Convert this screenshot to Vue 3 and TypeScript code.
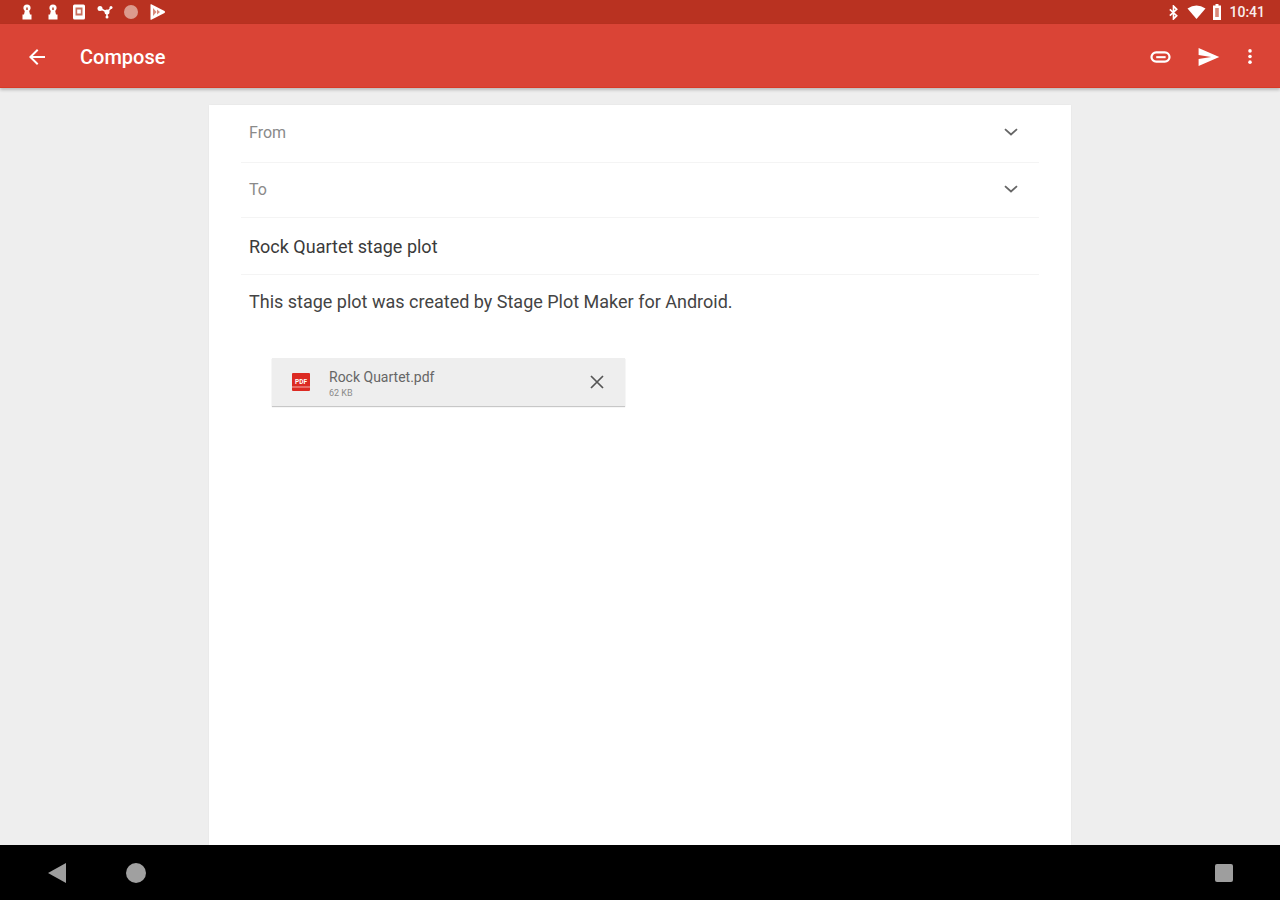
<script setup lang="ts">
const leftIcons = ['chess', 'chess', 'doc', 'nodes', 'dot', 'play']
</script>

<template>
  <div class="screen">
    <header class="status">
      <div class="status-left">
        <template v-for="(icon, i) in leftIcons" :key="i">
          <svg v-if="icon === 'chess'" class="si" viewBox="0 0 16 16"><path d="M8 .5a3.600 3.600 0 0 1 3.600 3.600c0 1.200-.6 2.200-1.400 2.800l.8 3.600h1.500V15.500H3.500V10.500H5l.8-3.600C5 6.300 4.400 5.300 4.400 4.100A3.600 3.600 0 0 1 8 .5z" fill="#fff"/><rect x="7" y="3.500" width="2" height="2.500" fill="#c9705f"/></svg>
          <svg v-else-if="icon === 'doc'" class="si" viewBox="0 0 16 16"><rect x="2" y=".5" width="12" height="15" rx="1.500" fill="#fff"/><rect x="4.500" y="3.500" width="7" height="8" fill="#c9705f"/><rect x="6.200" y="5.500" width="3.600" height="4" fill="#fff"/></svg>
          <svg v-else-if="icon === 'nodes'" class="si" viewBox="0 0 16 16"><path d="M3 4.500l7 3.500 4-4M10 8v5" stroke="#fff" stroke-width="1.500" fill="none"/><circle cx="3" cy="4.500" r="2.500" fill="#fff"/><circle cx="10" cy="8" r="2.500" fill="#fff"/><circle cx="14" cy="3.500" r="1.500" fill="#fff"/><circle cx="10" cy="13" r="1.500" fill="#fff"/></svg>
          <svg v-else-if="icon === 'dot'" class="si" viewBox="0 0 16 16"><circle cx="8" cy="8" r="7" fill="#dc9a8d"/></svg>
          <svg v-else class="si" viewBox="0 0 16 16"><path d="M1.500 .5q0-.5 .8-.2L15.500 7q1 1 0 2L2.300 15.700q-.8 .3-.8-.2z" fill="#fff"/><path d="M4 4l3.500 4L4 12zM8 5.500l3 2.500-3 2.500z" fill="#d98a7b"/></svg>
        </template>
      </div>
      <div class="status-right">
        <svg class="sr bt" viewBox="0 0 12 16"><path d="M2 4.500l7.500 7L6 15V1l3.500 3.500L2 11.500" stroke="#fff" stroke-width="1.800" fill="none"/></svg>
        <svg class="sr wifi" viewBox="0 0 18 14"><path d="M0 3.500Q9-2.500 18 3.500L9 14z" fill="#fff"/></svg>
        <svg class="sr batt" viewBox="0 0 10 16"><path d="M3.500 0h3v1.500H9V16H1V1.500h2.500z" fill="#fff"/><rect x="3.200" y="4" width="3.600" height="9" fill="#d98a7b"/></svg>
        <span class="time">10:41</span>
      </div>
    </header>

    <div class="toolbar">
      <svg class="back" viewBox="0 0 24 24"><path d="M20 11H7.830l5.590-5.590L12 4l-8 8 8 8 1.410-1.410L7.830 13H20z" fill="#fff"/></svg>
      <span class="title">Compose</span>
      <div class="actions">
        <svg class="clip" viewBox="0 0 24 14"><rect x="1.500" y="1.500" width="21" height="11" rx="5.500" stroke="#fff" stroke-width="2.600" fill="none"/><path d="M7 7.200h11" stroke="#fff" stroke-width="2.400"/></svg>
        <svg class="send" viewBox="0 0 24 20"><path d="M1 0l23 10L1 20v-7.800L15 10 1 7.800z" fill="#fff"/></svg>
        <svg class="more" viewBox="0 0 4 16"><circle cx="2" cy="2" r="1.900" fill="#fff"/><circle cx="2" cy="8" r="1.900" fill="#fff"/><circle cx="2" cy="14" r="1.900" fill="#fff"/></svg>
      </div>
    </div>

    <main class="content">
      <section class="card">
        <div class="row row-from">
          <span class="label">From</span>
          <svg class="chev" viewBox="0 0 14 8"><path d="M1 1.200l6 5.300 6-5.300" stroke="#666" stroke-width="1.800" fill="none"/></svg>
        </div>
        <div class="row row-to">
          <span class="label">To</span>
          <svg class="chev" viewBox="0 0 14 8"><path d="M1 1.200l6 5.300 6-5.300" stroke="#666" stroke-width="1.800" fill="none"/></svg>
        </div>
        <div class="row row-subject"><span class="text">Rock Quartet stage plot</span></div>
        <div class="body-text">This stage plot was created by Stage Plot Maker for Android.</div>
        <div class="attachment">
          <svg class="pdf" viewBox="0 0 18 18">
            <rect width="18" height="18" rx="1" fill="#dc2a22"/>
            <rect y="13.500" width="18" height="1" fill="#f3b0ab"/>
            <text x="9" y="10.500" text-anchor="middle" font-size="6.500" font-weight="700" fill="#fff" font-family="Roboto, sans-serif">PDF</text>
          </svg>
          <div class="file">
            <span class="file-name">Rock Quartet.pdf</span>
            <span class="file-size">62 KB</span>
          </div>
          <svg class="close" viewBox="0 0 14 14"><path d="M1 1l12 12M13 1L1 13" stroke="#555" stroke-width="1.700" fill="none"/></svg>
        </div>
      </section>
    </main>

    <nav class="navbar">
      <svg class="nav-back" viewBox="0 0 18 20"><path d="M0 10L18 0v20z" fill="#9e9e9e"/></svg>
      <span class="nav-home"></span>
      <span class="nav-recent"></span>
    </nav>
  </div>
</template>

<style>
html, body { margin: 0; padding: 0; }
</style>

<style scoped>
.screen {
  width: 1280px;
  height: 900px;
  display: flex;
  flex-direction: column;
  overflow: hidden;
  font-family: Roboto, "Liberation Sans", sans-serif;
  background: #eeeeee;
}
.status {
  height: 24px;
  flex: none;
  background: #b93221;
  display: flex;
  align-items: center;
  justify-content: space-between;
  padding: 0 15px 0 19px;
}
.status-left { display: flex; align-items: center; gap: 10px; }
.si { width: 16px; height: 16px; display: block; }
.status-right { display: flex; align-items: center; }
.sr { display: block; }
.bt { width: 11px; height: 15px; margin-right: 8px; }
.wifi { width: 19px; height: 14px; margin-right: 6px; }
.batt { width: 10px; height: 16px; margin-right: 7px; }
.time { color: #fff; font-size: 14px; font-weight: 500; opacity: .92; }
.toolbar {
  height: 64px;
  flex: none;
  background: #da4436;
  display: flex;
  align-items: center;
  padding: 2px 28px 0 25px;
  box-shadow: 0 2px 3px rgba(0, 0, 0, .22);
  border-bottom: 1px solid #d93a26;
  box-sizing: border-box;
  position: relative;
  z-index: 1;
}
.back { width: 24px; height: 24px; }
.title { margin-left: 31px; color: #fff; font-size: 20px; font-weight: 500; }
.actions { margin-left: auto; display: flex; align-items: center; }
.clip { width: 21px; height: 12px; margin-right: 26px; }
.send { width: 23px; height: 18px; margin-right: 28px; }
.more { width: 4px; height: 15px; }
.content {
  flex: 1;
  display: flex;
  justify-content: center;
  padding: 17px 0 0 0;
  min-height: 0;
  box-sizing: border-box;
}
.card {
  width: 862px;
  background: #fff;
  padding: 0 32px;
  box-sizing: border-box;
  box-shadow: 0 0 2px rgba(0, 0, 0, .05);
}
.row {
  display: flex;
  align-items: center;
  justify-content: space-between;
  border-bottom: 1px solid #f4f4f4;
  padding: 0 21px 0 8px;
  box-sizing: border-box;
}
.row-from { height: 58px; padding-bottom: 3px; }
.row-to { height: 55px; padding-bottom: 2px; }
.row-subject { height: 57px; }
.label { color: #8a8a8a; font-size: 16px; }
.text { color: #3a3a3a; font-size: 18px; }
.chev { width: 14px; height: 8px; }
.body-text {
  padding: 16px 0 0 8px;
  color: #444;
  font-size: 18px;
  line-height: 21px;
}
.attachment {
  margin: 46px 0 0 31px;
  width: 353px;
  height: 48px;
  background: #eeeeee;
  box-shadow: 0 1px 1px rgba(0, 0, 0, .22);
  display: flex;
  align-items: center;
  padding: 0 21px 0 20px;
  box-sizing: border-box;
}
.pdf { width: 18px; height: 18px; flex: none; }
.file { margin-left: 19px; display: flex; flex-direction: column; flex: 1; padding-top: 3px; }
.file-name { font-size: 14px; line-height: 16px; color: #666; }
.file-size { font-size: 9px; line-height: 12px; color: #8a8a8a; margin-top: 2px; }
.close { width: 14px; height: 14px; }
.navbar {
  height: 55px;
  flex: none;
  background: #000;
  display: flex;
  align-items: center;
  position: relative;
  z-index: 1;
}
.nav-back { width: 18px; height: 20px; margin-left: 48px; }
.nav-home { width: 20px; height: 20px; border-radius: 50%; background: #a0a0a0; margin-left: 60px; }
.nav-recent { width: 18px; height: 18px; border-radius: 2px; background: #9e9e9e; margin-left: auto; margin-right: 47px; }
</style>
